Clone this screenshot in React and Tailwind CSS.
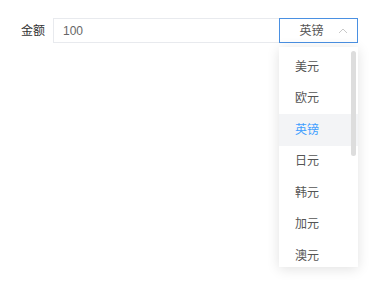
import React from "react";

const options = ["美元", "欧元", "英镑", "日元", "韩元", "加元", "澳元"];

export default function App() {
  const selected = "英镑";
  return (
    <div
      className="w-[382px] h-[281px] bg-white text-[12px]"
      style={{ fontFamily: '"Liberation Sans", "Noto Sans CJK SC", sans-serif' }}
    >
      <div className="flex items-center pt-[18px] pl-[21px]">
        <span className="text-[#333] mr-[8px]">金额</span>
        <div className="relative flex">
          <div className="w-[226px] h-[25px] border border-[#e8eaee] border-r-0 flex items-center pl-[9px] text-[#666]">
            100
          </div>
          <div className="relative">
            <div className="w-[79px] h-[25px] border border-[#4a90e2] flex items-center text-[#555]">
              <span className="flex-1 text-center pl-[6px]">{selected}</span>
              <svg width="12" height="12" viewBox="0 0 12 12" className="mr-[8px]">
                <path d="M2 8 L6 4 L10 8" fill="none" stroke="#c8c8c8" strokeWidth="1" />
              </svg>
            </div>
            <div className="absolute left-0 top-[29px] w-[79px] h-[220px] bg-white shadow-[0_2px_12px_rgba(0,0,0,0.12)] overflow-hidden pt-[4px]">
              {options.map((o) => (
                <div
                  key={o}
                  className={
                    o === selected
                      ? "h-[31.5px] flex items-center pl-[16px] bg-[#f3f4f6] text-[#409eff]"
                      : "h-[31.5px] flex items-center pl-[16px] text-[#555]"
                  }
                >
                  {o}
                </div>
              ))}
              <div className="absolute right-[2px] top-[4px] w-[5px] h-[105px] rounded-full bg-[#dddddd]" />
            </div>
          </div>
        </div>
      </div>
    </div>
  );
}
